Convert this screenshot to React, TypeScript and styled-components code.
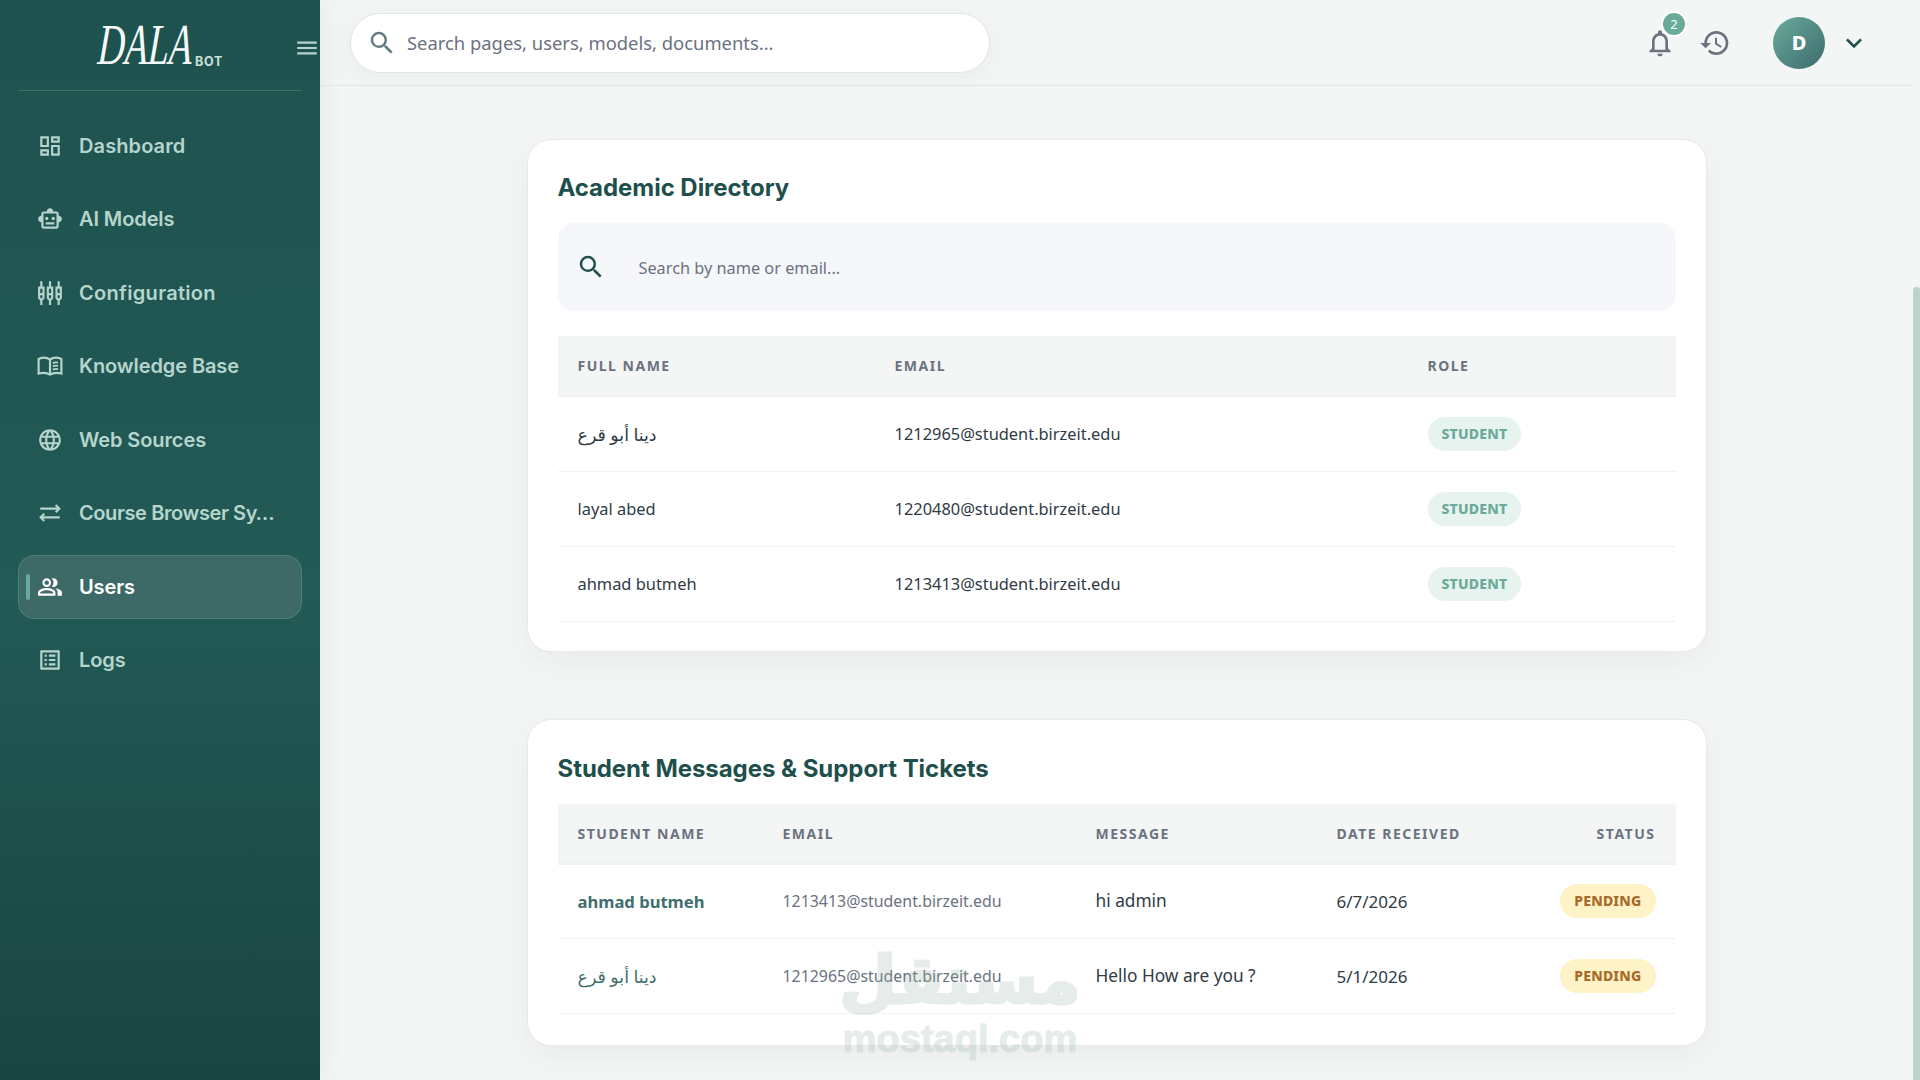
import React from "react";
import styled, { createGlobalStyle } from "styled-components";
import {
  MdExpandMore,
  MdHistory,
  MdLanguage,
  MdMenu,
  MdOutlineDashboard,
  MdOutlineListAlt,
  MdOutlineNotifications,
  MdOutlinePeopleAlt,
  MdOutlineSettingsInputComponent,
  MdOutlineSmartToy,
  MdOutlineSyncAlt,
  MdSearch,
} from "react-icons/md";

const GlobalStyle = createGlobalStyle`
  html, body {
    margin: 0;
    padding: 0;
    background: #f4f6f5;
  }
  * {
    box-sizing: border-box;
  }
`;

const Shell = styled.div`
  position: relative;
  display: flex;
  width: 100%;
  height: 100vh;
  overflow: hidden;
  font-family: "Noto Sans", "DejaVu Sans", sans-serif;
  background: #f4f6f5;
`;

const Sidebar = styled.aside`
  flex: 0 0 320px;
  height: 100%;
  padding: 0 18px;
  background: linear-gradient(180deg, #1e524f 0%, #225a56 55%, #1a4441 100%);
  box-shadow: 4px 0 24px rgba(30, 80, 76, 0.08);
`;

const Brand = styled.div`
  position: relative;
  height: 91px;
  border-bottom: 1px solid #3d716c;
  display: flex;
  align-items: flex-start;
  padding: 15px 0 0 80px;
`;

const LogoText = styled.span`
  display: inline-block;
  width: 95px;
  font-family: "Liberation Serif", serif;
  font-style: italic;
  font-size: 58px;
  line-height: 60px;
  white-space: nowrap;
  color: #f5faf8;
  transform-origin: left center;
  transform: scaleX(0.65) skewX(-5deg);
`;

const LogoSub = styled.span`
  font-family: Inter, sans-serif;
  font-size: 12.5px;
  font-weight: 700;
  letter-spacing: 0.8px;
  color: #c9e0da;
  margin: 39px 0 0 2px;
`;

const MenuToggle = styled.span`
  position: absolute;
  right: -18px;
  top: 35px;
  font-size: 26px;
  line-height: 0;
  color: #b8d4cc;
`;

const Nav = styled.nav`
  display: flex;
  flex-direction: column;
  gap: 9.5px;
  padding-top: 22.5px;
`;

const NavItem = styled.div<{ $active?: boolean; $spacing?: number }>`
  position: relative;
  height: 64px;
  display: flex;
  align-items: center;
  gap: 16px;
  padding-left: 18px;
  border-radius: 16px;
  border: 1px solid ${(p) => (p.$active ? "#4f7f7b" : "transparent")};
  background: ${(p) => (p.$active ? "#3d6a67" : "transparent")};
  color: ${(p) => (p.$active ? "#ffffff" : "#b5d5cc")};
  font-family: Inter, sans-serif;
  font-size: 20px;
  font-weight: 600;
  letter-spacing: ${(p) => p.$spacing ?? -0.1}px;
  white-space: nowrap;
`;

const ActiveBar = styled.span`
  position: absolute;
  left: 7px;
  top: 18px;
  width: 4px;
  height: 26px;
  border-radius: 2px;
  background: #6aaa9a;
`;

const NavIcon = styled.span`
  display: flex;
  font-size: 26px;
`;

const Content = styled.div`
  flex: 1;
  min-width: 0;
  padding-right: 7px;
`;

const Header = styled.header`
  height: 86px;
  display: flex;
  align-items: center;
  padding-left: 30px;
  border-bottom: 1px solid #e2e7e5;
`;

const GlobalSearch = styled.div`
  width: 640px;
  height: 60px;
  display: flex;
  align-items: center;
  gap: 10px;
  padding-left: 16px;
  border: 1px solid #e0e6e4;
  border-radius: 30px;
  background: #fff;
  box-shadow: 0 6px 22px rgba(30, 80, 76, 0.06);
  color: #6b7280;
  font-size: 18.4px;
`;

const SearchIcon = styled.span`
  display: flex;
  font-size: 30px;
  color: #5f7b80;
`;

const HeaderActions = styled.div`
  margin-left: auto;
  display: flex;
  align-items: center;
  padding-right: 43px;
`;

const IconButton = styled.span`
  position: relative;
  display: flex;
  font-size: 32px;
  color: #6b7280;
  margin-right: 23px;
`;

const CountBadge = styled.span`
  position: absolute;
  left: 17px;
  top: -16px;
  width: 26px;
  height: 26px;
  border: 2px solid #fff;
  border-radius: 50%;
  background: #6aaa9a;
  color: #fff;
  font-size: 13px;
  display: flex;
  align-items: center;
  justify-content: center;
`;

const Avatar = styled.span`
  width: 52px;
  height: 52px;
  margin-left: 19px;
  border-radius: 50%;
  background: linear-gradient(135deg, #6aaa9a, #3c6c6e);
  color: #fff;
  font-weight: 800;
  font-size: 20px;
  display: flex;
  align-items: center;
  justify-content: center;
`;

const Chevron = styled.span`
  display: flex;
  margin-left: 13px;
  font-size: 32px;
  color: #1e4f4c;
`;

const Main = styled.main`
  width: 1180px;
  margin: 0 auto;
  padding-top: 53px;
  display: flex;
  flex-direction: column;
  gap: 67px;
`;

const Card = styled.section<{ $top: number; $bottom: number }>`
  background: #fff;
  border: 1px solid #e6eae8;
  border-radius: 24px;
  padding: ${(p) => p.$top}px 30px ${(p) => p.$bottom}px;
  box-shadow: 0 10px 30px rgba(30, 60, 56, 0.06);
`;

const CardTitle = styled.h2<{ $gap: number }>`
  margin: 0 0 ${(p) => p.$gap}px;
  font-family: Inter, sans-serif;
  font-size: 24px;
  line-height: 32px;
  font-weight: 700;
  letter-spacing: -0.05px;
  color: #1e4f4c;
`;

const DirectorySearch = styled.div`
  height: 88px;
  margin-bottom: 25px;
  display: flex;
  align-items: center;
  gap: 33px;
  padding-left: 18px;
  border-radius: 16px;
  background: #f5f7fa;
  color: #6b7280;
  font-size: 16.3px;
`;

const DirectoryPlaceholder = styled.span`
  padding-top: 2px;
`;

const DarkSearchIcon = styled.span`
  display: flex;
  font-size: 30px;
  color: #1e4f4c;
`;

const Table = styled.table`
  width: 100%;
  border-collapse: collapse;
  table-layout: fixed;
`;

const HeadCell = styled.th<{ $width?: number; $right?: boolean }>`
  width: ${(p) => (p.$width ? `${p.$width}px` : "auto")};
  height: 60px;
  padding: 0 20px;
  background: #f4f6f5;
  border-bottom: 2px solid #eef2f4;
  text-align: ${(p) => (p.$right ? "right" : "left")};
  color: #6b7280;
  font-size: 14px;
  font-weight: 700;
  letter-spacing: 1.5px;
`;

const Cell = styled.td<{ $right?: boolean; $size?: number }>`
  height: 75px;
  padding: 0 20px;
  border-bottom: 1px solid #eff3f3;
  text-align: ${(p) => (p.$right ? "right" : "left")};
  color: #2f3b45;
  font-size: ${(p) => p.$size ?? 16.4}px;
`;

const NameCell = styled(Cell)<{ $regular?: boolean }>`
  color: #3f6f6f;
  font-weight: ${(p) => (p.$regular ? 400 : 700)};
`;

const MutedCell = styled(Cell)`
  color: #6b7280;
`;

const MessageCell = styled(Cell)`
  padding-bottom: 2px;
`;

const Pill = styled.span<{ $tone: "green" | "amber" }>`
  display: inline-block;
  height: 34px;
  line-height: 34px;
  padding: 0 14px;
  border-radius: 17px;
  background: ${(p) => (p.$tone === "green" ? "#e7f3ef" : "#fef3c7")};
  color: ${(p) => (p.$tone === "green" ? "#6aaa9a" : "#a86a2a")};
  font-size: 14px;
  font-weight: 800;
  letter-spacing: 0.2px;
  vertical-align: middle;
`;

const ScrollThumb = styled.span`
  position: absolute;
  right: 0;
  top: 287px;
  bottom: 0;
  width: 7px;
  background: #b8d4cc;
  border-radius: 3px 3px 0 0;
`;

const Watermark = styled.div`
  position: absolute;
  left: 845px;
  top: 943px;
  width: 230px;
  display: flex;
  flex-direction: column;
  align-items: center;
  color: #96b4a8;
  opacity: 0.24;
  font-family: "DejaVu Sans", sans-serif;
  font-weight: 700;
  pointer-events: none;
`;

const WatermarkArabic = styled.span`
  font-size: 66px;
  line-height: 76px;
  -webkit-text-stroke: 3px #96b4a8;
`;

const WatermarkLatin = styled.span`
  font-family: "Liberation Sans", sans-serif;
  font-size: 38px;
  line-height: 40px;
  -webkit-text-stroke: 1px #96b4a8;
`;

const BookIcon = () => (
  <svg width="1em" height="1em" viewBox="0 0 24 24" fill="none" stroke="currentColor" strokeWidth="2">
    <path d="M1.500 5.500c3.500-1.500 7.500-1.500 10.500.5 3-2 7-2 10.500-.5V19c-3.500-1-7.500-1-10.500 1-3-2-7-2-10.500-1z" />
    <path d="M12 6v14" />
    <path d="M14.500 9.300c1.500-.6 3-.7 5-.4M14.500 12.300c1.500-.6 3-.7 5-.4M14.500 15.300c1.500-.6 3-.7 5-.4" strokeWidth="1.600" />
  </svg>
);

const navItems = [
  { label: "Dashboard", icon: <MdOutlineDashboard />, spacing: 0.1 },
  { label: "AI Models", icon: <MdOutlineSmartToy /> },
  { label: "Configuration", icon: <MdOutlineSettingsInputComponent />, spacing: 0.3 },
  { label: "Knowledge Base", icon: <BookIcon /> },
  { label: "Web Sources", icon: <MdLanguage /> },
  { label: "Course Browser Sy…", icon: <MdOutlineSyncAlt />, spacing: -0.4 },
  { label: "Users", icon: <MdOutlinePeopleAlt />, active: true },
  { label: "Logs", icon: <MdOutlineListAlt /> },
];

const directory = [
  { name: "دينا أبو قرع", email: "1212965@student.birzeit.edu", arabic: true },
  { name: "layal abed", email: "1220480@student.birzeit.edu" },
  { name: "ahmad butmeh", email: "1213413@student.birzeit.edu" },
];

const tickets = [
  { name: "ahmad butmeh", email: "1213413@student.birzeit.edu", message: "hi admin", date: "6/7/2026" },
  { name: "دينا أبو قرع", email: "1212965@student.birzeit.edu", message: "Hello How are you ?", date: "5/1/2026", arabic: true },
];

export default function App() {
  return (
    <Shell>
      <GlobalStyle />
      <Sidebar>
        <Brand>
          <LogoText>DALA</LogoText>
          <LogoSub>BOT</LogoSub>
          <MenuToggle>
            <MdMenu />
          </MenuToggle>
        </Brand>
        <Nav>
          {navItems.map((item) => (
            <NavItem key={item.label} $active={item.active} $spacing={item.spacing}>
              {item.active && <ActiveBar />}
              <NavIcon>{item.icon}</NavIcon>
              {item.label}
            </NavItem>
          ))}
        </Nav>
      </Sidebar>

      <Content>
        <Header>
          <GlobalSearch>
            <SearchIcon>
              <MdSearch />
            </SearchIcon>
            Search pages, users, models, documents...
          </GlobalSearch>
          <HeaderActions>
            <IconButton>
              <MdOutlineNotifications />
              <CountBadge>2</CountBadge>
            </IconButton>
            <IconButton>
              <MdHistory />
            </IconButton>
            <Avatar>D</Avatar>
            <Chevron>
              <MdExpandMore />
            </Chevron>
          </HeaderActions>
        </Header>

        <Main>
          <Card $top={32} $bottom={29}>
            <CardTitle $gap={19}>Academic Directory</CardTitle>
            <DirectorySearch>
              <DarkSearchIcon>
                <MdSearch />
              </DarkSearchIcon>
              <DirectoryPlaceholder>Search by name or email...</DirectoryPlaceholder>
            </DirectorySearch>
            <Table>
              <thead>
                <tr>
                  <HeadCell $width={317}>FULL NAME</HeadCell>
                  <HeadCell $width={533}>EMAIL</HeadCell>
                  <HeadCell>ROLE</HeadCell>
                </tr>
              </thead>
              <tbody>
                {directory.map((row) => (
                  <tr key={row.email}>
                    <Cell $size={row.arabic ? 17.4 : undefined}>{row.name}</Cell>
                    <Cell>{row.email}</Cell>
                    <Cell>
                      <Pill $tone="green">STUDENT</Pill>
                    </Cell>
                  </tr>
                ))}
              </tbody>
            </Table>
          </Card>

          <Card $top={33.5} $bottom={30.5}>
            <CardTitle $gap={18.5}>Student Messages &amp; Support Tickets</CardTitle>
            <Table>
              <thead>
                <tr>
                  <HeadCell $width={205}>STUDENT NAME</HeadCell>
                  <HeadCell $width={313}>EMAIL</HeadCell>
                  <HeadCell $width={241}>MESSAGE</HeadCell>
                  <HeadCell $width={200}>DATE RECEIVED</HeadCell>
                  <HeadCell $right>STATUS</HeadCell>
                </tr>
              </thead>
              <tbody>
                {tickets.map((row) => (
                  <tr key={row.email}>
                    <NameCell $regular={row.arabic} $size={row.arabic ? 17.4 : 16.6}>{row.name}</NameCell>
                    <MutedCell $size={15.9}>{row.email}</MutedCell>
                    <MessageCell $size={17.3}>{row.message}</MessageCell>
                    <Cell $size={17}>{row.date}</Cell>
                    <Cell $right>
                      <Pill $tone="amber">PENDING</Pill>
                    </Cell>
                  </tr>
                ))}
              </tbody>
            </Table>
          </Card>
        </Main>
      </Content>

      <ScrollThumb />
      <Watermark>
        <WatermarkArabic>مستقل</WatermarkArabic>
        <WatermarkLatin>mostaql.com</WatermarkLatin>
      </Watermark>
    </Shell>
  );
}
